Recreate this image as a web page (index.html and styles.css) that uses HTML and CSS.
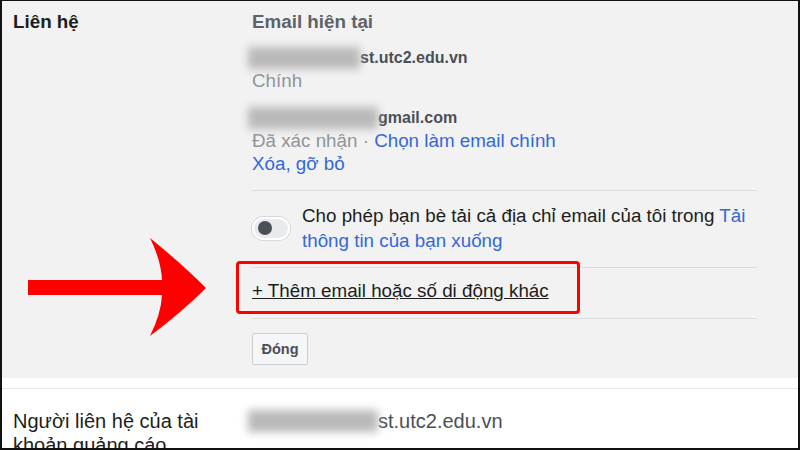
FILE: index.html
```html
<!DOCTYPE html>
<html lang="vi">
<head>
  <meta charset="UTF-8">
  <title>Cài đặt - Liên hệ</title>
  <link rel="stylesheet" href="styles.css">
</head>
<body>
  <div class="frame">
    <div class="section open">
      <div class="label">Liên hệ</div>
      <div class="content">
        <div class="heading">Email hiện tại</div>

        <div class="email first"><span class="hidden-part w1"></span><b>st.utc2.edu.vn</b></div>
        <div class="note">Chính</div>

        <div class="email second"><span class="hidden-part w2"></span><b>gmail.com</b></div>
        <div class="note">Đã xác nhận · <a href="#">Chọn làm email chính</a></div>
        <div class="note"><a href="#">Xóa, gỡ bỏ</a></div>

        <hr>

        <div class="toggle-row">
          <span class="toggle"><span class="knob"></span></span>
          <p>Cho phép bạn bè tải cả địa chỉ email của tôi trong <a href="#">Tải thông tin của bạn xuống</a></p>
        </div>

        <hr>

        <div class="add-row"><a href="#" class="add">+ Thêm email hoặc số di động khác</a></div>

        <hr>

        <button class="close">Đóng</button>
      </div>

      <!-- chú thích: mũi tên + khung đỏ -->
      <svg class="arrow" width="200" height="110" viewBox="0 0 200 110">
        <path d="M16 42 L150 42 Q149 22 138 0 Q170 26 194 50 Q170 74 138 98 Q149 76 150 57 L16 57 Z" fill="#ff0000"/>
      </svg>
      <div class="highlight"></div>
    </div>

    <div class="section other">
      <div class="label normal">Người liên hệ của tài khoản quảng cáo</div>
      <div class="content">
        <div class="email plain"><span class="hidden-part w3"></span>st.utc2.edu.vn</div>
      </div>
    </div>
  </div>
</body>
</html>
```

FILE: styles.css
```css
* {
  box-sizing: border-box;
}

body {
  margin: 0;
  font-family: "Liberation Sans", Arial, sans-serif;
  color: #1c1e21;
}

.frame {
  width: 800px;
  height: 450px;
  overflow: hidden;
  border: 2px solid #111;
  border-top-width: 1px;
  background: #fff;
}

.section {
  display: grid;
  grid-template-columns: 250px 505px;
}

.section.open {
  position: relative;
  background: #f2f2f2;
  padding: 9px 0 13px;
}

.label {
  padding-left: 11px;
  font-size: 18.8px;
  font-weight: bold;
  line-height: 24px;
}

.label.normal {
  font-size: 20px;
  font-weight: normal;
  line-height: 24px;
  padding-right: 24px;
}

.heading {
  font-size: 18.8px;
  font-weight: bold;
  color: #5d626b;
  line-height: 24px;
}

.email {
  display: flex;
  align-items: center;
  height: 24px;
  font-size: 16px;
  color: #4b4f56;
}

.email.first {
  margin-top: 12px;
}

.email.second {
  margin-top: 14px;
}

.hidden-part {
  display: block;
  height: 22px;
  background: #b9b9b9;
  filter: blur(4px);
  margin-left: -4px;
}

.w1 { width: 112px; }
.w2 { width: 130px; }
.w3 { width: 130px; }

.note {
  font-size: 18.8px;
  line-height: 22px;
  color: #90949c;
}

.note + .note {
  line-height: 24px;
}

a {
  color: #3268dc;
  text-decoration: none;
}

hr {
  border: none;
  border-top: 1px solid #dcdee3;
  margin: 14px 0 0;
}

.toggle-row {
  display: flex;
  align-items: center;
  gap: 12px;
  margin-top: 12px;
}

.toggle-row p {
  margin: 0;
  font-size: 18.8px;
  line-height: 25px;
  color: #1c1e21;
}

.toggle {
  flex: none;
  width: 38px;
  height: 23px;
  border-radius: 12px;
  background: #e9eaed;
  border: 2px solid #fff;
  box-shadow: 0 0 0 1px #d6d8dc;
  display: flex;
  align-items: center;
  padding-left: 4px;
}

.knob {
  width: 14px;
  height: 14px;
  border-radius: 50%;
  background: #4b4f56;
}

.add-row {
  margin-top: 11px;
  line-height: 24px;
}

.add {
  font-size: 18.8px;
  color: #1c1e21;
  text-decoration: underline;
}

.close {
  margin-top: 14px;
  height: 32px;
  width: 56px;
  padding: 0;
  font-family: inherit;
  font-size: 14.5px;
  font-weight: bold;
  color: #4b4f56;
  background: #f5f6f7;
  border: 1px solid #ccd0d5;
  border-radius: 2px;
}

.arrow {
  position: absolute;
  left: 10px;
  top: 237px;
}

.highlight {
  position: absolute;
  left: 234px;
  top: 260px;
  width: 344px;
  height: 53px;
  border: 3px solid #ff0000;
  border-radius: 4px;
}

.section.other {
  margin-top: 10px;
  border-top: 1px solid #e6e6e6;
  padding-top: 20px;
}

.email.plain {
  font-size: 20px;
  height: 24px;
}
```
